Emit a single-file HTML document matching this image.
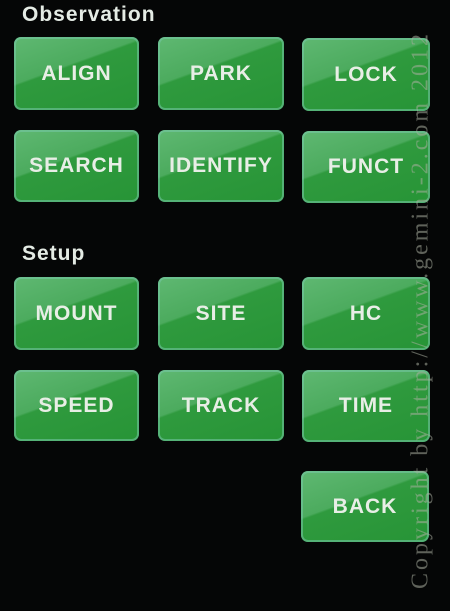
<!DOCTYPE html>
<html><head><style>
body{margin:0;width:450px;height:611px;background:#050606;overflow:hidden;position:relative;font-family:"Liberation Sans",sans-serif}
.h{position:absolute;color:#e4ebe4;font-weight:bold;font-size:21px;letter-spacing:1px}
.b{position:absolute;border-radius:7px;background:linear-gradient(160deg,#5fb872 0%,#4cab5e 40%,#2f9a3e 42%,#279436 100%);box-shadow:inset 0 0 0 2px rgba(120,200,170,0.55);color:#e8eee6;font-weight:bold;font-size:21px;letter-spacing:1px;display:flex;align-items:center;justify-content:center}
.w{position:absolute;left:421px;top:310px;transform:translate(-50%,-50%) rotate(-90deg);white-space:nowrap;font-family:"Liberation Serif",serif;font-size:24px;color:rgba(170,175,160,0.55);letter-spacing:3px}
</style></head><body>
<div class="h" style="left:22px;top:3px">Observation</div>
<div class="h" style="left:22px;top:242px">Setup</div>
<div class="b" style="left:14px;top:37px;width:125px;height:73px">ALIGN</div>
<div class="b" style="left:158px;top:37px;width:126px;height:73px">PARK</div>
<div class="b" style="left:302px;top:38px;width:128px;height:73px">LOCK</div>
<div class="b" style="left:14px;top:130px;width:125px;height:72px">SEARCH</div>
<div class="b" style="left:158px;top:130px;width:126px;height:72px">IDENTIFY</div>
<div class="b" style="left:302px;top:131px;width:128px;height:72px">FUNCT</div>
<div class="b" style="left:14px;top:277px;width:125px;height:73px">MOUNT</div>
<div class="b" style="left:158px;top:277px;width:126px;height:73px">SITE</div>
<div class="b" style="left:302px;top:277px;width:128px;height:73px">HC</div>
<div class="b" style="left:14px;top:370px;width:125px;height:71px">SPEED</div>
<div class="b" style="left:158px;top:370px;width:126px;height:71px">TRACK</div>
<div class="b" style="left:302px;top:370px;width:128px;height:72px">TIME</div>
<div class="b" style="left:301px;top:471px;width:128px;height:71px">BACK</div>
<div class="w">Copyright by http://www.gemini-2.com 2012</div>
</body></html>
